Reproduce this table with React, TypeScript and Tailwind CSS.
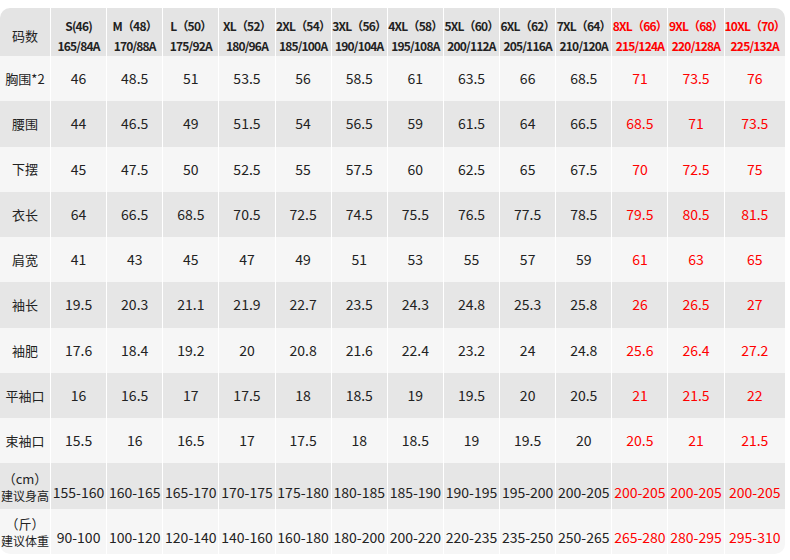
const sizes: [string, string][] = [
  ["S(46)", "165/84A"],
  ["M（48）", "170/88A"],
  ["L（50）", "175/92A"],
  ["XL（52）", "180/96A"],
  ["2XL（54）", "185/100A"],
  ["3XL（56）", "190/104A"],
  ["4XL（58）", "195/108A"],
  ["5XL（60）", "200/112A"],
  ["6XL（62）", "205/116A"],
  ["7XL（64）", "210/120A"],
  ["8XL（66）", "215/124A"],
  ["9XL（68）", "220/128A"],
  ["10XL（70）", "225/132A"],
];

type Row = { label: string; sub?: string; values: string[] };

const rows: Row[] = [
  { label: "胸围*2", values: ["46", "48.5", "51", "53.5", "56", "58.5", "61", "63.5", "66", "68.5", "71", "73.5", "76"] },
  { label: "腰围", values: ["44", "46.5", "49", "51.5", "54", "56.5", "59", "61.5", "64", "66.5", "68.5", "71", "73.5"] },
  { label: "下摆", values: ["45", "47.5", "50", "52.5", "55", "57.5", "60", "62.5", "65", "67.5", "70", "72.5", "75"] },
  { label: "衣长", values: ["64", "66.5", "68.5", "70.5", "72.5", "74.5", "75.5", "76.5", "77.5", "78.5", "79.5", "80.5", "81.5"] },
  { label: "肩宽", values: ["41", "43", "45", "47", "49", "51", "53", "55", "57", "59", "61", "63", "65"] },
  { label: "袖长", values: ["19.5", "20.3", "21.1", "21.9", "22.7", "23.5", "24.3", "24.8", "25.3", "25.8", "26", "26.5", "27"] },
  { label: "袖肥", values: ["17.6", "18.4", "19.2", "20", "20.8", "21.6", "22.4", "23.2", "24", "24.8", "25.6", "26.4", "27.2"] },
  { label: "平袖口", values: ["16", "16.5", "17", "17.5", "18", "18.5", "19", "19.5", "20", "20.5", "21", "21.5", "22"] },
  { label: "束袖口", values: ["15.5", "16", "16.5", "17", "17.5", "18", "18.5", "19", "19.5", "20", "20.5", "21", "21.5"] },
  {
    label: "建议身高",
    sub: "（cm）",
    values: ["155-160", "160-165", "165-170", "170-175", "175-180", "180-185", "185-190", "190-195", "195-200", "200-205", "200-205", "200-205", "200-205"],
  },
  {
    label: "建议体重",
    sub: "（斤）",
    values: ["90-100", "100-120", "120-140", "140-160", "160-180", "180-200", "200-220", "220-235", "235-250", "250-265", "265-280", "280-295", "295-310"],
  },
];

// last three sizes are printed in red
const isRed = (i: number) => i >= 10;

export default function App() {
  return (
    <div className="h-[560px] w-[790px] bg-white pt-[8px] font-['Noto_Sans_CJK_SC',_'Noto_Sans',sans-serif] text-[#222]">
      <div className="grid h-[546px] w-[785px] grid-cols-[50px_repeat(13,1fr)] grid-rows-[48px_repeat(11,1fr)] gap-x-px overflow-hidden rounded-[10px] bg-white">
        {/* header */}
        <div className="flex items-center justify-center bg-[#e4e4e4] pt-[8px] text-[13px]">码数</div>
        {sizes.map(([name, spec], i) => (
          <div
            key={name}
            className={`flex flex-col items-center justify-center whitespace-nowrap bg-[#e4e4e4] pt-[8px] text-[12px] font-bold leading-[20px] tracking-[-0.8px] ${isRed(i) ? "text-[#ff0000]" : ""}`}
          >
            <span>{name}</span>
            <span>{spec}</span>
          </div>
        ))}

        {rows.map((row, r) => {
          const bg = r % 2 === 0 ? "bg-[#f6f6f6]" : "bg-[#e6e6e6]";
          return [
            <div
              key={row.label}
              className={`flex flex-col items-center justify-center whitespace-nowrap ${bg} ${row.sub ? "pt-[2px] text-[12px] leading-[17px]" : "text-[13px]"}`}
            >
              {row.sub && <span className="text-[13px]">{row.sub}</span>}
              <span>{row.label}</span>
            </div>,
            ...row.values.map((v, i) => (
              <div
                key={row.label + i}
                className={`flex items-center justify-center whitespace-nowrap text-[14px] ${bg} ${row.sub ? "pt-[12px]" : ""} ${isRed(i) ? "text-[#ff0000]" : ""}`}
              >
                {v}
              </div>
            )),
          ];
        })}
      </div>
    </div>
  );
}
